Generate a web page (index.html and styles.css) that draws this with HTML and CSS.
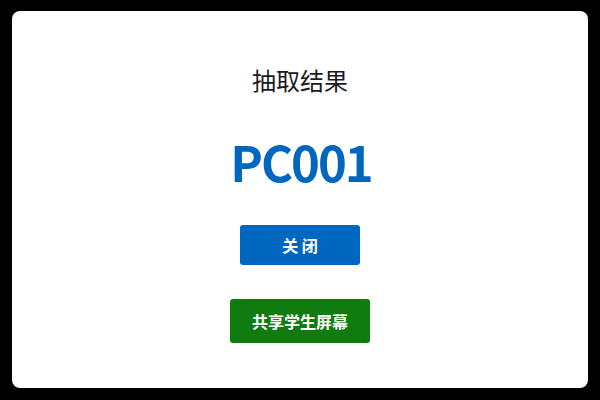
FILE: index.html
```html
<!DOCTYPE html>
<html lang="zh-CN">
<head>
<meta charset="utf-8">
<title>抽取结果</title>
<link rel="stylesheet" href="styles.css">
</head>
<body>
<div class="card">
  <h1 class="title">抽取结果</h1>
  <div class="result">PC001</div>
  <button class="btn btn-close">关 闭</button>
  <button class="btn btn-share">共享学生屏幕</button>
</div>
</body>
</html>
```
FILE: styles.css
```css
html, body {
  margin: 0;
  padding: 0;
  background: #000;
  width: 600px;
  height: 400px;
  overflow: hidden;
}
body {
  padding: 11px 12px 12px 12px;
  box-sizing: border-box;
  font-family: "Noto Sans CJK SC", "Noto Sans", sans-serif;
}
.card {
  background: #fff;
  border-radius: 8px;
  height: 377px;
  box-sizing: border-box;
  padding-top: 51px;
  display: flex;
  flex-direction: column;
  align-items: center;
}
.title {
  margin: 0;
  font-size: 24px;
  font-weight: 400;
  line-height: 36px;
  color: #1a1a1a;
}
.result {
  margin-top: 33px;
  padding-left: 2px;
  font-size: 49px;
  font-weight: 700;
  letter-spacing: -2px;
  line-height: 60px;
  color: #0067c0;
}
.btn {
  border: none;
  border-radius: 3px;
  color: #fff;
  font-family: "Noto Sans CJK SC", "Noto Sans", sans-serif;
  font-weight: 700;
  font-size: 16px;
  padding: 0;
  display: flex;
  align-items: center;
  justify-content: center;
}
.btn-close {
  margin-top: 34px;
  width: 120px;
  height: 40px;
  background: #0067c0;
}
.btn-share {
  margin-top: 34px;
  width: 140px;
  height: 44px;
  background: #107c10;
}
```
